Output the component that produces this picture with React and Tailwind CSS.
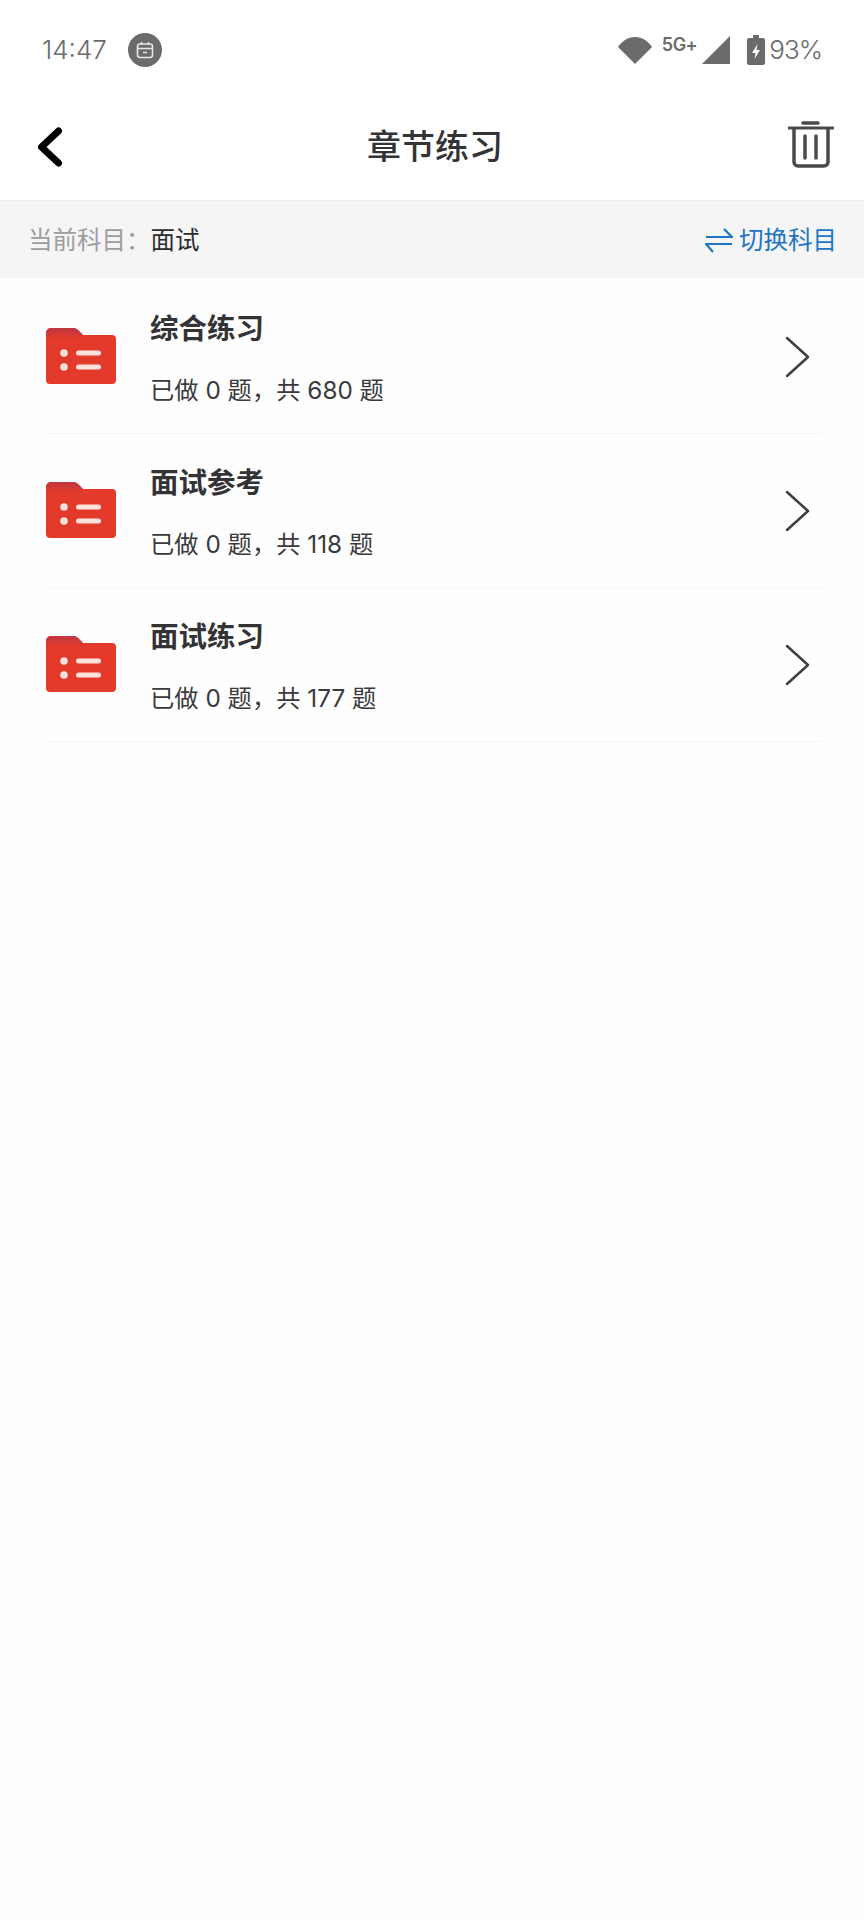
import React from "react";

const CJK = "font-['Inter','Noto_Sans_CJK_SC',sans-serif]";

const chapters = [
  { name: "综合练习", total: 680 },
  { name: "面试参考", total: 118 },
  { name: "面试练习", total: 177 },
];

const FolderIcon = () => (
  <svg width="72" height="58" viewBox="0 0 72 58" className="shrink-0 -ml-[1px] mb-[2px]">
    <defs>
      <linearGradient id="folderTop" x1="0" y1="0" x2="0" y2="1">
        <stop offset="0" stopColor="#bf3640" />
        <stop offset="1" stopColor="#e33a2b" />
      </linearGradient>
    </defs>
    <path d="M1 6a5 5 0 0 1 5-5h22q3 0 5 2l5 5h29a4 4 0 0 1 4 4v41a4 4 0 0 1-4 4H5a4 4 0 0 1-4-4z" fill="#e33a2b" />
    <path d="M1 6a5 5 0 0 1 5-5h22q3 0 5 2l5 5 0 4H1z" fill="url(#folderTop)" />
    <circle cx="19" cy="26" r="3.800" fill="#fbe3dc" />
    <circle cx="19" cy="40" r="3.800" fill="#fbe3dc" />
    <rect x="31" y="23.500" width="25" height="5" rx="2.500" fill="#fbe3dc" />
    <rect x="31" y="37.500" width="25" height="5" rx="2.500" fill="#fbe3dc" />
  </svg>
);

const StatusBar = () => (
  <div className="h-[100px] flex items-center pl-[42px] pr-[42px] text-[#6b6a6c] bg-white">
    <span className="text-[26px] font-light w-[64px] leading-none">14:47</span>
    <span className="ml-[22px] w-[34px] h-[34px] rounded-full bg-[#6b6a6c] flex items-center justify-center">
      <svg width="20" height="20" viewBox="0 0 20 20" fill="none" stroke="#e8e8e8" strokeWidth="1.600">
        <rect x="2.500" y="4" width="15" height="13.500" rx="2.500" />
        <path d="M2.500 8.500h15M6.500 2v3M13.500 2v3M8 12.500h4" />
      </svg>
    </span>
    <div className="ml-auto flex items-center">
      <svg width="34" height="28" viewBox="0 0 34 28">
        <path d="M0 11C4 5 10 1 17 1s13 4 17 10L17 28z" fill="#6b6a6c" />
      </svg>
      <span className="ml-[10px] mb-[10px] text-[18px] font-semibold leading-none tracking-[-0.5px]">5G+</span>
      <svg width="28" height="28" viewBox="0 0 28 28" className="ml-[5px]">
        <path d="M28 0v28H0z" fill="#6b6a6c" />
      </svg>
      <svg width="18" height="30" viewBox="0 0 18 30" className="ml-[17px]">
        <path d="M2 3h4V0h6v3h4a2 2 0 0 1 2 2v23a2 2 0 0 1-2 2H2a2 2 0 0 1-2-2V5a2 2 0 0 1 2-2z" fill="#6b6a6c" />
        <path d="M10.500 9 5 18h3.500l-1 6L13 15H9.500z" fill="#fff" />
      </svg>
      <span className="ml-[4px] text-[26px] font-light leading-none tracking-[-1px]">93%</span>
    </div>
  </div>
);

const App = () => (
  <div className={`h-[1920px] w-[864px] flex flex-col bg-[#fefefe] ${CJK}`}>
    <StatusBar />
    <div className="h-[100px] flex items-center px-[30px] pb-[6px] bg-white">
      <div className="flex-1 pl-[6px]">
        <svg width="28" height="42" viewBox="0 0 28 42" fill="none" stroke="#000" strokeWidth="7" strokeLinecap="round" strokeLinejoin="round">
          <path d="M22.500 5 5.500 21 22.500 37" />
        </svg>
      </div>
      <h1 className="text-[34px] font-medium text-[#333336] leading-none">章节练习</h1>
      <div className="flex-1 flex justify-end -mt-[7px]">
        <svg width="46" height="48" viewBox="0 0 46 48" fill="none" stroke="#4a4a4c" strokeLinecap="round">
          <path d="M1 8h44" strokeWidth="3" />
          <path d="M15 3h15" strokeWidth="3.500" />
          <path d="M6 9v33a4 4 0 0 0 4 4h26a4 4 0 0 0 4-4V9" strokeWidth="3.500" />
          <path d="M17 16v22M28 16v22" strokeWidth="3.500" />
        </svg>
      </div>
    </div>
    <div className="h-[78px] flex items-center justify-between pl-[28px] pr-[27px] pt-[1px] bg-[#f5f5f6] border-t border-[#eeeeef]">
      <div className="flex items-center text-[24.500px] leading-none">
        <span className="text-[#9d9d9f]">当前科目：</span>
        <span className="text-[#2b2b2d]">面试</span>
      </div>
      <div className="flex items-center text-[24.500px] leading-none text-[#1f74c4]">
        <svg width="28" height="26" viewBox="0 0 28 26" fill="none" stroke="#1f74c4" strokeWidth="2.200" className="mr-[6px]">
          <path d="M1 10h26L19 2M27 17H1l7 8" />
        </svg>
        切换科目
      </div>
    </div>
    <div className="flex flex-col mt-[2px]">
      {chapters.map((chapter) => (
        <div key={chapter.name} className="h-[154px] ml-[46px] mr-[42px] flex items-center border-b border-[#f5f4f6]">
          <FolderIcon />
          <div className="ml-[33px] pt-[4px] flex flex-col">
            <span className="text-[28.500px] font-semibold text-[#333336] leading-none">{chapter.name}</span>
            <span className="mt-[35px] text-[24.300px] text-[#3a3a3c] leading-none">已做 0 题，共 {chapter.total} 题</span>
          </div>
          <svg width="26" height="42" viewBox="0 0 26 42" fill="none" stroke="#3f3f42" strokeWidth="2.500" strokeLinecap="round" strokeLinejoin="round" className="ml-auto mr-[11px]">
            <path d="M2 2l21 19L2 40" />
          </svg>
        </div>
      ))}
    </div>
  </div>
);

export default App;
